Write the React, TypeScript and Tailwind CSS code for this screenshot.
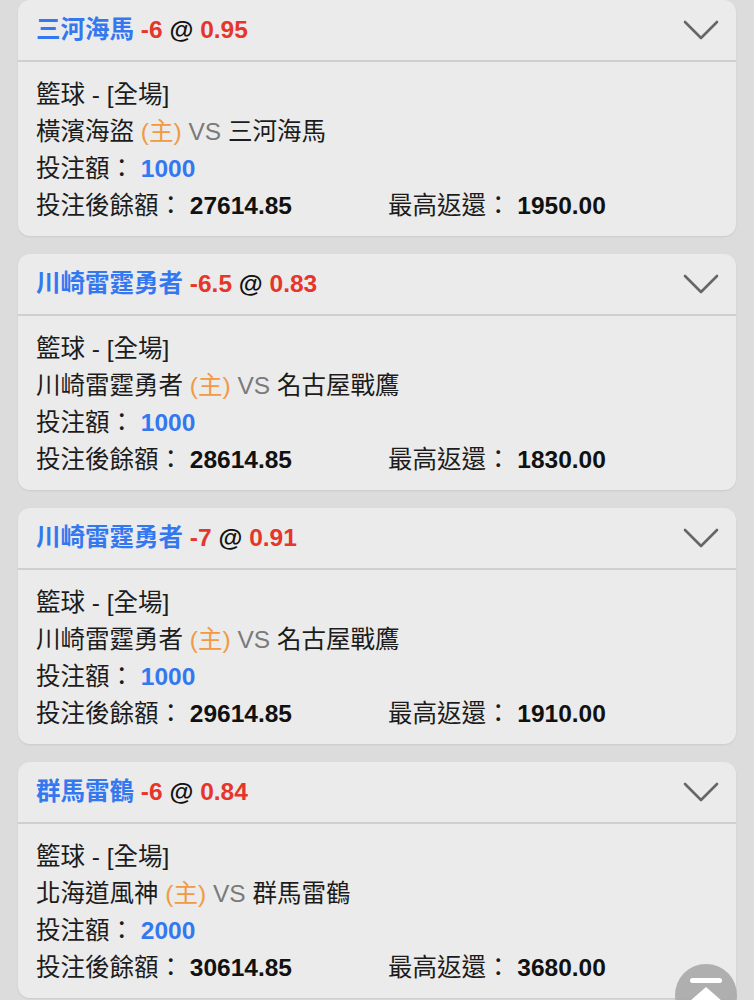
import React from "react"

const font = { fontFamily: '"Liberation Sans", "Noto Sans CJK TC", sans-serif' }

type Bet = {
  pick: string
  line: string
  odds: string
  home: string
  away: string
  stake: string
  balance: string
  maxReturn: string
}

const bets: Bet[] = [
  { pick: "三河海馬", line: "-6", odds: "0.95", home: "橫濱海盜", away: "三河海馬", stake: "1000", balance: "27614.85", maxReturn: "1950.00" },
  { pick: "川崎雷霆勇者", line: "-6.5", odds: "0.83", home: "川崎雷霆勇者", away: "名古屋戰鷹", stake: "1000", balance: "28614.85", maxReturn: "1830.00" },
  { pick: "川崎雷霆勇者", line: "-7", odds: "0.91", home: "川崎雷霆勇者", away: "名古屋戰鷹", stake: "1000", balance: "29614.85", maxReturn: "1910.00" },
  { pick: "群馬雷鶴", line: "-6", odds: "0.84", home: "北海道風神", away: "群馬雷鶴", stake: "2000", balance: "30614.85", maxReturn: "3680.00" },
]

const Chevron = () => (
  <svg width="36" height="22" viewBox="0 0 36 22" fill="none">
    <path d="M2 3 L18 19 L34 3" stroke="#666" strokeWidth="2.6" strokeLinecap="round" strokeLinejoin="round" />
  </svg>
)

const BetCard = ({ bet }: { bet: Bet }) => {
  return (
    <div className="bg-[#ebebeb] rounded-[12px] shadow-[0_1px_2px_rgba(0,0,0,0.08)] overflow-hidden">
      <div className="h-[62px] flex items-center justify-between pl-[18px] pr-[17px] border-b-2 border-[#cfcfcf]">
        <div className="text-[24.5px] font-bold leading-none pt-[1px]">
          <span className="text-[#3478f0]">{bet.pick}</span>{" "}
          <span className="text-[#e6352b]">{bet.line}</span>{" "}
          <span className="text-[#111]">@</span>{" "}
          <span className="text-[#e6352b]">{bet.odds}</span>
        </div>
        <Chevron />
      </div>
      <div className="px-[18px] pt-[14px] pb-[12px] text-[24.5px] leading-[37px] text-[#1c1c1c]">
        <div>籃球 - [全場]</div>
        <div>
          {bet.home} <span className="text-[#f09a45]">(主)</span>{" "}
          <span className="text-[#7a7a7a]">VS</span> {bet.away}
        </div>
        <div>
          投注額： <span className="font-bold text-[#3478f0]">{bet.stake}</span>
        </div>
        <div className="flex">
          <div className="w-[352px]">
            投注後餘額： <span className="font-bold text-[#111]">{bet.balance}</span>
          </div>
          <div>
            最高返還： <span className="font-bold text-[#111]">{bet.maxReturn}</span>
          </div>
        </div>
      </div>
    </div>
  )
}

export default function App() {
  return (
    <div style={font} className="relative h-[1000px] overflow-hidden bg-[#dcdcdc] px-[18px]">
      <div className="flex flex-col gap-[18px]">
        {bets.map((bet, index) => (
          <BetCard key={index} bet={bet} />
        ))}
      </div>
      <div className="absolute left-[675px] top-[964px] w-[62px] h-[62px] rounded-full bg-[#a9a9a9]/90 flex flex-col items-center pt-[14px]">
        <div className="w-[32px] h-[5px] rounded-full bg-white" />
        <div className="mt-[4px] w-0 h-0 border-l-[16px] border-r-[16px] border-b-[14px] border-l-transparent border-r-transparent border-b-white" />
      </div>
    </div>
  )
}
